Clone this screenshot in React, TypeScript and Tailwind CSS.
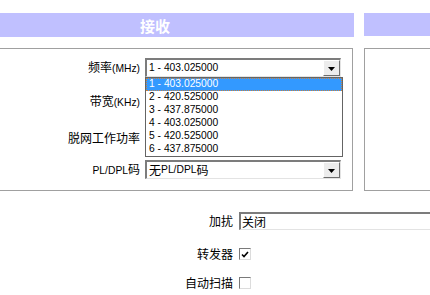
import React from "react";

const L = ({ children }: { children: React.ReactNode }) => (
  <span className="font-['Liberation_Sans',sans-serif] text-[10.3px]">{children}</span>
);

function DropButton() {
  return (
    <div className="flex w-[17px] items-center justify-center border-t border-l border-t-[#ffffff] border-l-[#ffffff] border-b border-r border-b-[#6e6e6e] border-r-[#6e6e6e] bg-[#ececec]">
      <svg width="7" height="4" viewBox="0 0 7 4" className="mt-[2px]">
        <polygon points="0,0 7,0 3.5,4" fill="#000" />
      </svg>
    </div>
  );
}

function SelectBox({ children, list }: { children?: React.ReactNode; list?: React.ReactNode }) {
  return (
    <div className="relative ml-[5px] flex h-[19px] w-[196px] shrink-0 border-t-2 border-l-2 border-t-[#7c7c7c] border-l-[#7c7c7c] border-b border-r border-b-[#e3e3e3] border-r-[#e3e3e3] bg-white">
      <div className="flex flex-1 items-center pl-[2px] leading-none">{children}</div>
      <DropButton />
      {list}
    </div>
  );
}

const options = [
  "1 - 403.025000",
  "2 - 420.525000",
  "3 - 437.875000",
  "4 - 403.025000",
  "5 - 420.525000",
  "6 - 437.875000",
];

function DropList() {
  return (
    <div className="absolute left-[-2px] top-[17px] z-10 w-[198px] border border-[#646464] bg-white">
      {options.map((o, i) =>
        i === 0 ? (
          <div
            key={o}
            className="flex h-[13px] items-center border border-dotted border-[#c8803c] bg-[#3399ff] pl-[2px] leading-none text-white"
          >
            <L>{o}</L>
          </div>
        ) : (
          <div key={o} className="flex h-[13px] items-center pl-[3px] leading-none text-black">
            <L>{o}</L>
          </div>
        )
      )}
    </div>
  );
}

function Row({ label, children, className }: { label: React.ReactNode; children?: React.ReactNode; className?: string }) {
  return (
    <div className={"flex h-[19px] items-center " + (className ?? "")}>
      <div className="w-[183px] shrink-0 text-right leading-none">{label}</div>
      {children}
    </div>
  );
}

function Checkbox({ checked }: { checked?: boolean }) {
  return (
    <div className="flex h-[12px] w-[12px] items-center justify-center border-t border-l border-t-[#7a7a7a] border-l-[#7a7a7a] border-b border-r border-b-[#dcdcdc] border-r-[#dcdcdc] bg-white">
      {checked && (
        <svg width="8" height="7" viewBox="0 0 8 7">
          <polyline points="1,3.5 3,5.5 7,1" fill="none" stroke="#000" strokeWidth="1.6" />
        </svg>
      )}
    </div>
  );
}

export default function App() {
  return (
    <div className="relative h-[295px] w-[430px] overflow-hidden bg-white font-['Noto_Sans_CJK_SC',sans-serif] text-[12px] text-black">
      <div className="ml-[-44px] flex">
        <div className="w-[398px] shrink-0">
          <div className="mt-[13px] flex h-[24px] items-center justify-center bg-[#c0c0ff] text-[15px] font-bold leading-none text-white">
            接收
          </div>
          <div className="mr-[1px] mt-[11px] h-[143px] border border-[#a0a0a0] pt-[9px]">
            <Row label={<>频率<L>(MHz)</L></>}>
              <SelectBox list={<DropList />}>
                <L>1 - 403.025000</L>
              </SelectBox>
            </Row>
            <Row className="mt-[15px]" label={<>带宽<L>(KHz)</L></>}>
              <SelectBox />
            </Row>
            <Row className="mt-[17px]" label="脱网工作功率">
              <SelectBox />
            </Row>
            <Row className="mt-[13px]" label={<><L>PL/DPL</L>码</>}>
              <SelectBox>
                <span>无</span>
                <L>PL/DPL</L>
                <span>码</span>
              </SelectBox>
            </Row>
          </div>
        </div>
        <div className="ml-[10px] w-[200px] shrink-0">
          <div className="mt-[13px] h-[23px] bg-[#c0c0ff]" />
          <div className="mt-[12px] h-[143px] border border-[#a0a0a0]" />
        </div>
      </div>

      <div className="mt-[21px]">
        <div className="flex h-[18px] items-center">
          <div className="w-[233px] shrink-0 text-right leading-none">加扰</div>
          <div className="ml-[6px] flex h-[18px] w-[220px] shrink-0 items-center border-t-2 border-l-2 border-t-[#7c7c7c] border-l-[#7c7c7c] border-b border-r border-b-[#e3e3e3] border-r-[#e3e3e3] bg-white pl-[1px] leading-none">
            关闭
          </div>
        </div>
        <div className="mt-[15px] flex h-[18px] items-center">
          <div className="w-[233px] shrink-0 text-right leading-none">转发器</div>
          <div className="ml-[6px] shrink-0">
            <Checkbox checked />
          </div>
        </div>
        <div className="mt-[11px] flex h-[18px] items-center">
          <div className="w-[233px] shrink-0 text-right leading-none">自动扫描</div>
          <div className="ml-[6px] shrink-0">
            <Checkbox />
          </div>
        </div>
      </div>
    </div>
  );
}
